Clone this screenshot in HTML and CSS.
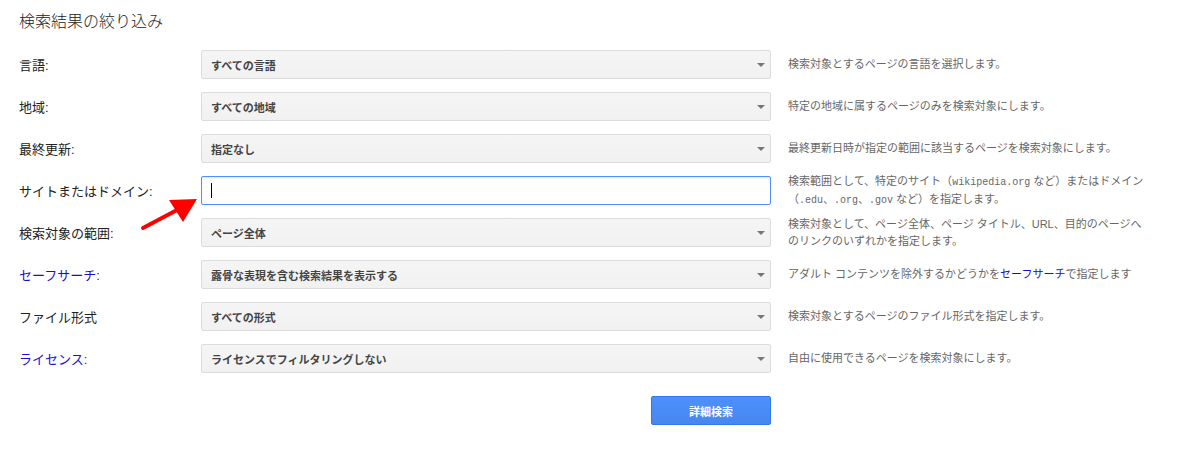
FILE: index.html
```html
<!DOCTYPE html>
<html lang="ja">
<head>
<meta charset="utf-8">
<title>検索結果の絞り込み</title>
<link rel="stylesheet" href="styles.css">
</head>
<body>
<div class="page">
  <h2 class="title">検索結果の絞り込み</h2>

  <div class="row">
    <div class="label">言語:</div>
    <div class="field select"><span>すべての言語</span><i class="caret"></i></div>
    <div class="desc">検索対象とするページの言語を選択します。</div>
  </div>

  <div class="row">
    <div class="label">地域:</div>
    <div class="field select"><span>すべての地域</span><i class="caret"></i></div>
    <div class="desc">特定の地域に属するページのみを検索対象にします。</div>
  </div>

  <div class="row">
    <div class="label">最終更新:</div>
    <div class="field select"><span>指定なし</span><i class="caret"></i></div>
    <div class="desc">最終更新日時が指定の範囲に該当するページを検索対象にします。</div>
  </div>

  <div class="row">
    <div class="label">サイトまたはドメイン:</div>
    <div class="field input"><span class="cursor"></span></div>
    <div class="desc">検索範囲として、特定のサイト（<span class="mono">wikipedia.org</span> など）またはドメイン<br>（<span class="mono">.edu</span>、<span class="mono">.org</span>、<span class="mono">.gov</span> など）を指定します。</div>
  </div>

  <div class="row">
    <div class="label">検索対象の範囲:</div>
    <div class="field select"><span>ページ全体</span><i class="caret"></i></div>
    <div class="desc">検索対象として、ページ全体、ページ タイトル、URL、目的のページへ<br>のリンクのいずれかを指定します。</div>
  </div>

  <div class="row">
    <div class="label link">セーフサーチ:</div>
    <div class="field select"><span>露骨な表現を含む検索結果を表示する</span><i class="caret"></i></div>
    <div class="desc">アダルト コンテンツを除外するかどうかを<span class="link">セーフサーチ</span>で指定します</div>
  </div>

  <div class="row">
    <div class="label">ファイル形式</div>
    <div class="field select"><span>すべての形式</span><i class="caret"></i></div>
    <div class="desc">検索対象とするページのファイル形式を指定します。</div>
  </div>

  <div class="row">
    <div class="label link">ライセンス:</div>
    <div class="field select"><span>ライセンスでフィルタリングしない</span><i class="caret"></i></div>
    <div class="desc">自由に使用できるページを検索対象にします。</div>
  </div>

  <div class="actions">
    <div class="button">詳細検索</div>
  </div>

  <svg class="arrow" width="70" height="42" viewBox="0 0 70 42">
    <line x1="8" y1="35" x2="42" y2="17" stroke="#f00" stroke-width="4" stroke-linecap="round"/>
    <polygon points="62,6 48,29 34,7" fill="#f00"/>
  </svg>
</div>
</body>
</html>
```

FILE: styles.css
```css
html, body {
  margin: 0;
  padding: 0;
  background: #fff;
}

body {
  font-family: "Liberation Sans", Arial, "Noto Sans CJK JP", sans-serif;
  color: #222;
}

.page {
  position: relative;
  padding: 12px 0 0 19px;
}

.title {
  margin: 0 0 18px;
  font-size: 16px;
  line-height: 20px;
  font-weight: 300;
  color: #222;
}

.row {
  display: flex;
  align-items: center;
  height: 29px;
  margin-bottom: 13px;
}

.label {
  width: 182px;
  flex: none;
  font-size: 13px;
  color: #222;
}

.link {
  color: #1a0dcf;
}

.field {
  width: 570px;
  height: 29px;
  box-sizing: border-box;
  flex: none;
  border-radius: 2px;
  display: flex;
  align-items: center;
}

.select {
  background: linear-gradient(#f5f5f5, #f1f1f1);
  border: 1px solid #dcdcdc;
  padding: 0 0 0 9px;
  font-size: 11px;
  font-weight: bold;
  color: #444;
  justify-content: space-between;
}

.caret {
  width: 0;
  height: 0;
  border-left: 4px solid transparent;
  border-right: 4px solid transparent;
  border-top: 4px solid #777;
  margin-right: 5px;
}

.input {
  background: #fff;
  border: 1px solid #4d90fe;
  box-shadow: inset 0 1px 2px rgba(0, 0, 0, 0.1);
  padding-left: 9px;
}

.cursor {
  display: block;
  width: 1px;
  height: 15px;
  background: #000;
}

.desc {
  margin-left: 17px;
  width: 390px;
  flex: none;
  font-size: 11px;
  line-height: 17px;
  color: #666;
}

.mono {
  font-family: "Liberation Mono", "DejaVu Sans Mono", monospace;
  font-size: 10px;
}

.actions {
  padding: 10px 0 0 632px;
}

.button {
  width: 120px;
  height: 29px;
  box-sizing: border-box;
  background: linear-gradient(#4d90fe, #4787ed);
  border: 1px solid #3079ed;
  border-radius: 2px;
  color: #fff;
  font-size: 11px;
  font-weight: bold;
  display: flex;
  align-items: center;
  justify-content: center;
}

.arrow {
  position: absolute;
  left: 135px;
  top: 193px;
}
```
